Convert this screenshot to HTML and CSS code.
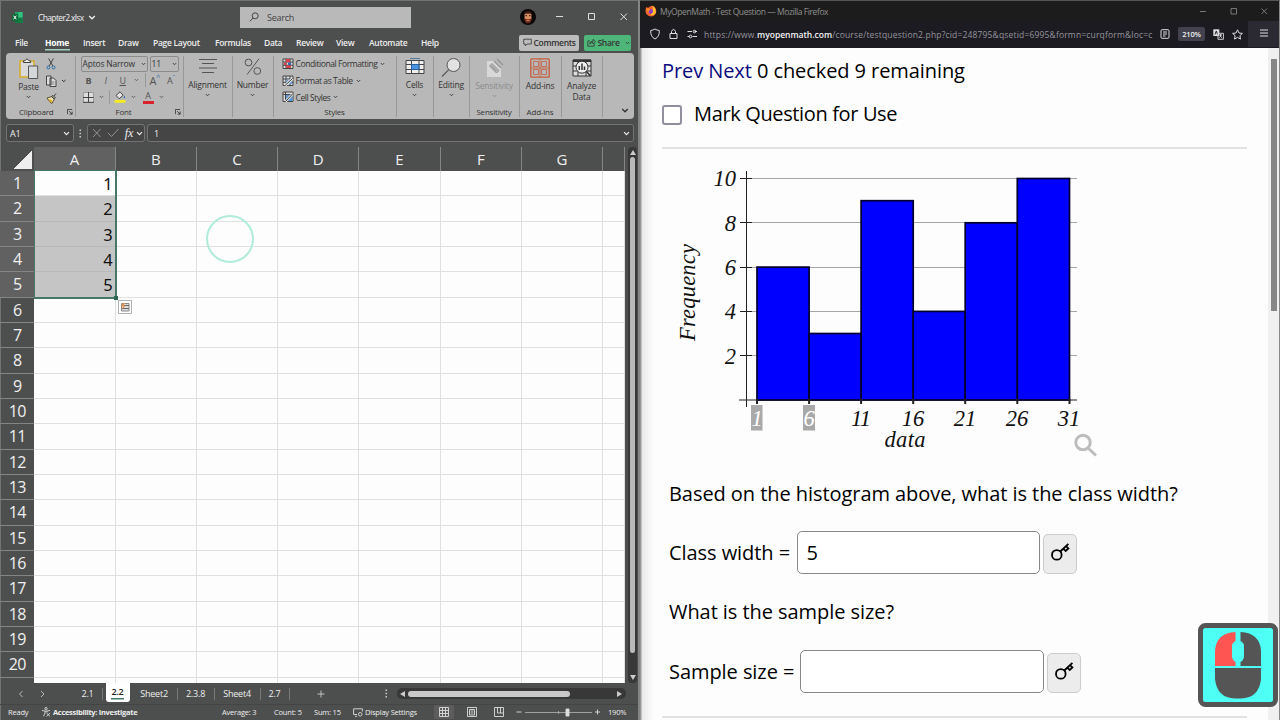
FILE: index.html
```html
<!DOCTYPE html>
<html lang="en">
	<head>
		<meta charset="UTF-8" />
		<meta name="viewport" content="width=device-width, initial-scale=1.0" />
		<title>Chapter 2 - Histograms</title>
		<link rel="stylesheet" href="styles.css">
	</head>
	<body>
		<svg class="defs">
			<symbol id="chev" viewBox="0 0 10 6"><path d="M1.5 1L5 4.5L8.5 1" fill="none" stroke="currentColor" stroke-width="1.7" /></symbol>
			<symbol id="launch" viewBox="0 0 7 7"><path d="M.5 6V.5H6M2.5 2.5L6 6M6 3V6H3" fill="none" stroke="currentColor" /></symbol>
			<symbol id="key" viewBox="0 0 20 20"><circle cx="6.8" cy="12.9" r="4.8" /><path d="M10.3 9.5L18.4 1.8M13.3 6.7L15.7 9L18.4 6.5L16.1 4.2" /></symbol>
		</svg>

		<!-- Excel -->
		<div class="excel">
			<div class="titlebar">
				<svg class="logo" viewBox="0 0 11 11"><path d="M3 0H10.5V11H3Z" fill="#21a366" /><path d="M6.5 0H10.5V5H6.5Z" fill="#33c481" /><path d="M3 6H10.5V11H3Z" fill="#107c41" /><rect y="2" width="6" height="7" rx=".6" fill="#0d6a38" /><path d="M1.6 3.7L4.3 7.3M4.3 3.7L1.6 7.3" stroke="#fff" /></svg>
				<span class="filename">Chapter2.xlsx</span>
				<svg class="chev"><use href="#chev" /></svg>
				<div class="search">
					<svg viewBox="0 0 10 10"><circle cx="6.2" cy="3.8" r="3" /><path d="M4 6L.8 9.4" /></svg>
					<span>Search</span>
				</div>
				<svg class="avatar" viewBox="0 0 16 16"><circle cx="8" cy="8" r="8" fill="#080606" /><path d="M4.6 5Q8 1 11.4 5V10Q11 13.6 8 14Q5 13.6 4.6 10Z" fill="#d98d63" /><path d="M4.4 5.5Q4.8 2.2 8 2.2T11.6 5.5L10.6 4.8H5.4Z" fill="#4a2117" /><path d="M4.6 9.5L6.2 10H9.8L11.4 9.5Q11.2 14.2 8 14.5Q4.8 14.2 4.6 9.5Z" fill="#702a1c" /><path d="M5.5 6.7H7M9 6.7H10.5" stroke="#29110b" /><path d="M6.6 11.3H9.4" stroke="#e9a07d" /></svg>
				<svg class="winbtns" viewBox="0 0 76 12"><path d="M3 5.5H10M35.5 2.5H41.5V8.5H35.5ZM67.5 2.500L74 9M74 2.500L67.5 9" /></svg>
			</div>
			<div class="menu">
				<span class="m1">File</span><span class="m2 active">Home</span><span class="m3">Insert</span><span class="m4">Draw</span><span class="m5">Page Layout</span><span class="m6">Formulas</span><span class="m7">Data</span><span class="m8">Review</span><span class="m9">View</span><span class="m10">Automate</span><span class="m11">Help</span>
				<div class="comments"><svg viewBox="0 0 9 9"><path d="M.7 1.2H8.3V6H4L2.3 7.8V6H.7Z" /></svg>Comments</div>
				<div class="share"><svg viewBox="0 0 9 9"><path d="M3 3H.8V8.2H7.2V5.6M2.6 6Q3 3.2 6 3.2V1.3L8.5 3.7L6 6V4.5Q4 4.4 2.6 6Z" /></svg>Share<svg class="chev"><use href="#chev" /></svg></div>
			</div>
			<div class="ribbon">
				<div class="group clipboard">
					<div class="tools">
						<div class="big">
							<svg class="paste" viewBox="0 0 20 22"><path d="M1 3H15V19H1Z" fill="#d9d9d9" stroke="#d5ad2b" stroke-width="1.6" /><path d="M4.5 4.5V2.8H6Q8-.8 10 2.8H11.6V4.5Z" fill="#eee" stroke="#444" /><path d="M9.5 8H18.7V20.5H9.5Z" fill="#d4d7da" stroke="#555" /></svg>
							<span>Paste</span>
							<svg class="chev"><use href="#chev" /></svg>
						</div>
						<div class="small">
							<svg viewBox="0 0 16 12"><path d="M2.6.5L6.8 8M7.4.5L3.2 8" stroke="#444" fill="none" /><circle cx="2.4" cy="9.5" r="1.5" fill="none" stroke="#2c6da8" /><circle cx="7.6" cy="9.5" r="1.5" fill="none" stroke="#2c6da8" /></svg>
							<svg class="wide" viewBox="0 0 20 12"><path d="M.5 1H5V10H.5ZM4 3H7.5L10 5.5V11.5H4Z" fill="#ddd" stroke="#444" /><path d="M5.5 7H8.5M5.5 9H8.5" stroke="#444" stroke-width=".6" /><path d="M16 5L17.8 6.7L19.6 5" fill="none" stroke="#333" /></svg>
							<svg viewBox="0 0 16 12"><path d="M1 6L6 4.5L8.4 7L6 11.5Q3 10 1 6Z" fill="#eee3b0" stroke="#5c5031" /><path d="M5.5 4.5L8 7L9.4 5.8L7 3.4ZM8 4.2L10 1.5" fill="none" stroke="#444" /><path d="M3 8L6 9.5" stroke="#dfae26" stroke-width="2" /></svg>
						</div>
					</div>
					<div class="caption">Clipboard<svg class="launch"><use href="#launch" /></svg></div>
				</div>
				<div class="group font">
					<div class="combos">
						<div class="combo">Aptos Narrow<svg class="chev"><use href="#chev" /></svg></div>
						<div class="combo size">11<svg class="chev"><use href="#chev" /></svg></div>
					</div>
					<div class="fontrow">
						<b>B</b><i>I</i><u>U</u><svg class="chev"><use href="#chev" /></svg><span class="bar"></span><span class="grow">A<sup>^</sup></span><span class="shrink">A<sup>ˇ</sup></span>
					</div>
					<div class="fontrow second">
						<svg class="borders" viewBox="0 0 11 11"><path d="M.5.5H10.5V10.5H.5Z" fill="#ddd" stroke="#999" /><path d="M5.5 0V10M0 5.5H10.5M0 10.3H11" stroke="#444" /></svg>
						<svg class="chev"><use href="#chev" /></svg>
						<span class="bar"></span>
						<svg class="fill" viewBox="0 0 12 12"><path d="M2 4.5L6 .8L9.2 4.2L5.2 7.7Z" fill="#e4e4e4" stroke="#444" /><path d="M10.3 4.5Q11.8 7 10.3 7.4Q9 7 10.3 4.5" fill="#296fae" /><path d="M.5 9H11.5V11.8H.5Z" fill="#f2ec21" /></svg>
						<svg class="chev"><use href="#chev" /></svg>
						<span class="color">A</span>
						<svg class="chev"><use href="#chev" /></svg>
					</div>
					<div class="caption">Font<svg class="launch"><use href="#launch" /></svg></div>
				</div>
				<div class="group w49">
					<svg class="icon" viewBox="0 0 20 20"><path d="M1 1.500H19M4 5.500H16M1 10H19M4 14.500H16" stroke="#555" fill="none" /></svg>
					<span>Alignment</span><svg class="chev"><use href="#chev" /></svg>
				</div>
				<div class="group w41">
					<svg class="icon" viewBox="0 0 20 20"><g fill="none" stroke="#555"><circle cx="5.500" cy="4.500" r="3.400" /><circle cx="14.300" cy="13" r="3.400" /><path d="M16 .8L4 16.600" /></g></svg>
					<span>Number</span><svg class="chev"><use href="#chev" /></svg>
				</div>
				<div class="group styles">
					<div class="srow"><svg viewBox="0 0 12 12"><path d="M1 1H11V10.5H1Z" fill="#ddd" stroke="#444" /><path d="M1 4H11M1 7.3H11M4 1V10.5M8 1V10.5" stroke="#444" /><path d="M4 1H8V4H4ZM2 4.5H4.5V7H2ZM4 7.5H9V10H4Z" fill="#d8434b" /><path d="M6 4.5H9V7H6Z" fill="#356eb6" /></svg>Conditional Formatting<svg class="chev"><use href="#chev" /></svg></div>
					<div class="srow"><svg viewBox="0 0 12 12"><path d="M1 1H11V10.5H1Z" fill="#ddd" stroke="#444" /><path d="M1 4H11M1 7.3H11M4 1V10.5M8 1V10.5" stroke="#444" /><path d="M4.5 4.5H10V9H4.5Z" fill="#6aa0d8" /><path d="M3 10.5L10.5 3.5" stroke="#eee" stroke-width="2.4" /><path d="M3 10.5L10.5 3.5" stroke="#333" /></svg>Format as Table<svg class="chev"><use href="#chev" /></svg></div>
					<div class="srow"><svg viewBox="0 0 12 12"><path d="M1 1H11V10.5H1Z" fill="#ddd" stroke="#444" /><path d="M1 3.5H11M3.5 1V10.5" stroke="#444" /><path d="M4 4H10.5V10H4Z" fill="#5d98d2" /><path d="M3.5 10.5L10.5 3" stroke="#eee" stroke-width="2.4" /><path d="M3.5 10.5L10.5 3" stroke="#333" /></svg>Cell Styles<svg class="chev"><use href="#chev" /></svg></div>
					<div class="caption">Styles</div>
				</div>
				<div class="group w37">
					<svg class="icon" viewBox="0 0 20 20"><path d="M1 2.500H19V15.500H1Z" fill="#eee" stroke="#444" /><path d="M1 6.500H19M1 11.500H19M6.5 2.500V15.500M14 2.500V15.500" stroke="#444" /><path d="M6.5 6.500H14V11.500H6.5Z" fill="#4e93df" stroke="#2461a4" /><path d="M5 .3H15" stroke="#356d98" /></svg>
					<span>Cells</span><svg class="chev"><use href="#chev" /></svg>
				</div>
				<div class="group w36">
					<svg class="icon" viewBox="0 0 20 20"><circle cx="12.5" cy="7" r="6.5" fill="#e2e2e2" stroke="#555" /><path d="M7.8 11.700L1 18.500" stroke="#555" stroke-width="1.2" /></svg>
					<span>Editing</span><svg class="chev"><use href="#chev" /></svg>
				</div>
				<div class="group w50 low">
					<svg class="icon" viewBox="0 0 20 20"><path d="M3 3H11L17 9V19H3Z" fill="#d8d8d8" /><path d="M10 3L17 10M13 1L19 7" stroke="#999" stroke-width="1.6" /><path d="M5.5 8L8 5.5L15 12.5L12.5 15Z" fill="#b8b8b8" stroke="#929292" /><path d="M7.500 8L12.500 13" stroke="#888" /></svg>
					<span class="dim">Sensitivity</span><svg class="chev dim"><use href="#chev" /></svg>
					<div class="caption">Sensitivity</div>
				</div>
				<div class="group w42 low">
					<svg class="icon" viewBox="0 0 20 20"><g fill="none" stroke="#c65d3c"><rect x=".8" y=".8" width="18.4" height="18.4" rx="1" stroke-width="1.3" /><path d="M3.5 3.5H8.5V8.5H3.5ZM11.5 3.5H16.5V8.5H11.5ZM3.5 11.5H8.5V16.5H3.5ZM11.5 11.5H16.5V16.5H11.5ZM10 1V19M1 10H19" stroke-width=".8" /></g></svg>
					<span>Add-ins</span>
					<div class="caption">Add-ins</div>
				</div>
				<div class="group w41 low analyze">
					<svg class="icon" viewBox="0 0 20 20"><path d="M1 2H19V18H1Z" fill="#ddd" stroke="#333" /><path d="M1 3.5H19M1 8H19M1 13H19M6 4V18M14 4V18" stroke="#333" /><path d="M1 2.5H19" stroke="#333" stroke-width="2" /><circle cx="10" cy="9.2" r="6" fill="#eee" stroke="#333" /><path d="M14.4 13.4L18.6 18" stroke="#333" stroke-width="1.5" /><path d="M7.3 8V12M10 5.5V12M12.5 8.5V12" stroke="#333" stroke-width="1.5" /></svg>
					<span>Analyze<br />Data</span>
				</div>
				<svg class="chev collapse"><use href="#chev" /></svg>
			</div>
			<div class="formulabar">
				<div class="namebox">A1<svg class="chev"><use href="#chev" /></svg></div>
				<svg class="dots" viewBox="0 0 3 9"><path d="M.5.5H2V2H.5ZM.5 3.7H2V5.2H.5ZM.5 7H2V8.5H.5Z" fill="#ccc" /></svg>
				<div class="fx">
					<svg viewBox="0 0 30 10"><path d="M1 1L8.5 9M8.5 1L1 9M16 5L19.5 8.5L26.5 1" fill="none" stroke="#929292" /></svg>
					<i>fx</i><svg class="chev"><use href="#chev" /></svg>
				</div>
				<div class="formula">1<svg class="chev"><use href="#chev" /></svg></div>
			</div>
			<div class="sheetarea">
				<div class="sheet">
					<div class="selection"></div>
					<svg class="quick" viewBox="0 0 14 14"><path d="M.5.5H13.5V13.5H.5Z" fill="#fff" stroke="#adb3b0" /><path d="M3.5 3.5H11V11H3.5Z" fill="#ddd" stroke="#888" /><path d="M6 5.5H11M4 8.5H11" stroke="#666" /><path d="M5 3L3 6.5H5L4 9.5L7.5 5.5H5.7L7 3Z" fill="#e4924c" /></svg>
					<div class="click"></div>
				</div>
				<div class="vscroll"><i class="up"></i><span></span><i class="down"></i></div>
			</div>
			<div class="tabs">
				<svg class="nav" viewBox="0 0 28 8"><path d="M4.5 1L1.5 4L4.5 7M23 1L26 4L23 7" fill="none" stroke="#b5b5b5" /></svg>
				<span class="tab t1">2.1</span><span class="tab current">2.2</span><span class="tab t3">Sheet2</span><span class="tab t4">2.3.8</span><span class="tab t5">Sheet4</span><span class="tab t6">2.7</span>
				<svg class="add" viewBox="0 0 8 8"><path d="M4 .5V7.5M.5 4H7.5" stroke="#ccc" stroke-width=".9" /></svg>
				<svg class="dots" viewBox="0 0 3 9"><path d="M.5.5H2V2H.5ZM.5 3.7H2V5.2H.5ZM.5 7H2V8.5H.5Z" fill="#ccc" /></svg>
				<div class="hscroll"><i class="left"></i><span></span><i class="right"></i></div>
			</div>
			<div class="status">
				<span class="s1">Ready</span>
				<svg class="acc" viewBox="0 0 10 10"><circle cx="5" cy="1.7" r="1.2" /><path d="M1 3.4L4 4.2V6L2.5 9.3M9 3.4L6 4.2V5.5M4 4.2H6M5.5 6L9 9.3M9 6L5.5 9.3" /></svg>
				<span class="s2">Accessibility: Investigate</span><span class="s3">Average: 3</span><span class="s4">Count: 5</span><span class="s5">Sum: 15</span>
				<svg class="disp" viewBox="0 0 10 9"><path d="M4 6.5H.6V.8H9.4V3.5M2 8.3H4" /><circle cx="7.2" cy="6.3" r="1.8" /></svg>
				<span class="s6">Display Settings</span>
				<span class="vbtn on"><svg viewBox="0 0 10 10"><path d="M.5.5H9.5V9.5H.5ZM3.5.5V9.5M6.5.5V9.5M.5 3.5H9.5M.5 6.5H9.5" /></svg></span>
				<span class="vbtn"><svg viewBox="0 0 10 10"><path d="M.5.5H9.5V9.5H.5ZM2.5 2.5H7.5V8H2.5ZM3.5 4H6.5M3.5 6H6.5" /></svg></span>
				<span class="vbtn"><svg viewBox="0 0 10 10"><path d="M.5.5H9.5V9.5H.5ZM3.5.5V6H9.5M6.5.5V6" /></svg></span>
				<svg class="zoom" viewBox="0 0 84 10"><path d="M.5 5H5.5M79 5H84M81.5 2.5V7.5" stroke="#ddd" /><path d="M9 5.5H76M42.5 4V7" stroke="#aaa" /><path d="M50 2H53V9H50Z" fill="#ddd" /></svg>
				<span class="s7">190%</span>
			</div>
		</div>

		<!-- Firefox -->
		<div class="firefox">
			<div class="fftitle">
				<svg class="fox" viewBox="0 0 12 12"><path d="M6 1Q9 0 10.7 3.6Q12.5 8.5 8.5 11Q4 12.6 1.2 9Q-.4 5.4 1.6 1.7L3 3Q4.5 1.6 6 1Z" fill="#f3632b" /><path d="M7.5.5Q11.6 4 10.7 8Q8.5 11 5 10Q9 8 7.5.5Z" fill="#ffc32c" /><circle cx="5.6" cy="6.3" r="2.4" fill="#8c3ccc" /><path d="M1.4 3Q4.5 3.2 5.5 5Q3.5 5 3.6 7.4Q1.4 7 1.4 3Z" fill="#fb8b22" /></svg>
				<span>MyOpenMath - Test Question — Mozilla Firefox</span>
				<svg class="winbtns" viewBox="0 0 76 12"><path d="M5 6.5H11M36 3.5H41.5V9H36ZM66.5 3.5L72 9M72 3.5L66.5 9" /></svg>
			</div>
			<div class="urlbar">
				<svg class="urlicons" viewBox="0 0 50 12"><path d="M6 1Q8 2.3 10.3 2.5Q10.7 8.7 6 11Q1.300 8.700 1.700 2.500Q4 2.300 6 1ZM21 5.500H28V10.500H21ZM22.500 5.500V3.500Q24.500-.8 26.500 3.500V5.500M38.500 3.500H43M45.500 3.500H48M38.500 8.500H40.500M43.500 8.500H48" /><circle cx="45.500" cy="3.500" r="1.300" /><circle cx="41.500" cy="8.500" r="1.300" /></svg>
				<span class="url">https://www.<b>myopenmath.com</b>/course/testquestion2.php?cid=248795&amp;qsetid=6995&amp;formn=curqform&amp;loc=c</span>
				<svg class="reader" viewBox="0 0 10 10"><rect x="1" y=".7" width="8" height="8.600" rx="1" /><path d="M3 3H7M3 5H7M3 7H5.500" /></svg>
				<span class="pct">210%</span>
				<svg class="translate" viewBox="0 0 11 11"><path d="M.3.3H6.300V7H.3Z" fill="#ddd" stroke="none" /><path d="M2 5.500L3.300 2L4.600 5.500" stroke="#222" /><path d="M5 4.300H10.400V10.300H5ZM6.300 6H9M7.700 5V6Q7.500 8 6.300 8.700M7 7L9 8.700" stroke-width=".9" /></svg>
				<svg class="star" viewBox="0 0 11 11"><path d="M5.500.8L7 4L10.400 4.400L7.900 6.700L8.500 10.100L5.500 8.400L2.500 10.100L3.100 6.700L.6 4.400L4 4Z" /></svg>
				<span class="burger"><svg viewBox="0 0 8 8"><path d="M0 1H8M0 4H8M0 7H8" /></svg></span>
			</div>
			<div class="page">
				<div class="content">
					<div class="nav-links"><a>Prev</a> <a>Next</a> 0 checked 9 remaining</div>
					<label class="mark"><span class="box"></span><span class="marktext">Mark Question for Use</span></label>
					<hr />
					<svg class="chart" viewBox="662 160 450 300">
						<path class="grid" d="M740 178.500H1077M740 222.500H1077M740 267.500H1077M740 311.500H1077M740 355.500H1077" />
						<path class="tick" d="M740 178.500H752M740 222.500H752M740 267.500H752M740 311.500H752M740 355.500H752M746.500 171V407M739 400H1077" />
						<g class="bars">
							<rect x="757" y="267.100" width="52.100" height="132.900" />
							<rect x="809.100" y="333.500" width="52" height="66.500" />
							<rect x="861.100" y="200.700" width="52.100" height="199.300" />
							<rect x="913.200" y="311.400" width="52" height="88.600" />
							<rect x="965.200" y="222.800" width="52.100" height="177.200" />
							<rect x="1017.300" y="178.500" width="52.200" height="221.500" />
						</g>
						<path class="bottom" d="M757 399V404M809.100 399V404M861.100 399V404M913.200 399V404M965.200 399V404M1017.300 399V404M1069.500 399V404" />
						<path class="marked" d="M751 405H762.500V430.500H751ZM803 405H815V430.500H803Z" />
						<g class="ylab">
							<text x="736" y="186">10</text><text x="736" y="230.500">8</text><text x="736" y="275">6</text><text x="736" y="319">4</text><text x="736" y="363.500">2</text>
						</g>
						<g class="xlab">
							<text class="sel" x="757" y="425.500">1</text><text class="sel" x="809" y="425.500">6</text><text x="861" y="425.500" textLength="20">11</text><text x="913" y="425.500">16</text><text x="965" y="425.500">21</text><text x="1017" y="425.500">26</text><text x="1069" y="425.500">31</text>
							<text x="905" y="447" textLength="41">data</text>
							<text transform="translate(695 292.500) rotate(-90)" textLength="97">Frequency</text>
						</g>
						<g class="lens"><circle cx="1083" cy="442.500" r="7.200" /><path d="M1088 448L1096 455.500" /></g>
					</svg>
					<p class="q1">Based on the histogram above, what is the class width?</p>
					<div class="answer a1"><label>Class width =</label><div class="field">5</div><div class="keybtn"><svg><use href="#key" /></svg></div></div>
					<p class="q2">What is the sample size?</p>
					<div class="answer a2"><label>Sample size =</label><div class="field"></div><div class="keybtn"><svg><use href="#key" /></svg></div></div>
					<hr class="end" />
				</div>
				<div class="ffscroll"><span></span></div>
			</div>
		</div>

		<!-- mouse button indicator, floats over the browser -->
		<svg class="mouse" viewBox="0 0 80 84">
			<rect x="2.500" y="2.500" width="75" height="79" rx="5" fill="#4dfff4" stroke="#555" stroke-width="5" />
			<path d="M17 43V28Q18 10 37.500 9V18Q34 20 34 23V33Q34 37 37.500 39V43Z" fill="#ff5552" />
			<path d="M63 43V28Q62 10 42.500 9V18Q46 20 46 23V33Q46 37 42.500 39V43Z" fill="#555" />
			<path d="M17 45H63V56Q61 75 43 75.500H37Q19 75 17 56Z" fill="#555" />
		</svg>

		<script>
			const sheet = document.querySelector(".sheet");
			const values = [1, 2, 3, 4, 5];

			function addCell(className, text) {
				const cell = document.createElement("div");
				cell.className = className;
				cell.textContent = text;
				sheet.appendChild(cell);
			}

			// Column letters, the eighth column is cut off
			addCell("corner", "");
			["A", "B", "C", "D", "E", "F", "G", ""].forEach((c) => addCell(c === "A" ? "col picked" : "col", c));

			for (let r = 1; r <= 21; r++) {
				addCell(r <= values.length ? "num picked" : "num", r <= 20 ? r : "");
				for (let c = 0; c < 8; c++) {
					const filled = c === 0 && r <= values.length;
					addCell(filled && r > 1 ? "cell shaded" : "cell", filled ? values[r - 1] : "");
				}
			}
		</script>
	</body>
</html>
```
FILE: styles.css
```css
* {
	box-sizing: border-box;
}

body {
	margin: 0;
	width: 1280px;
	height: 720px;
	overflow: hidden;
	display: flex;
	position: relative;
	font-family: "Open Sans", "Noto Sans", sans-serif;
}

svg {
	display: block;
	flex: none;
}

.defs {
	position: absolute;
	width: 0;
	height: 0;
}

.chev {
	width: 5px;
	height: 4px;
}

/* ---------- Excel ---------- */
.excel {
	width: 640px;
	height: 720px;
	flex: none;
	display: flex;
	flex-direction: column;
	background: #4d4f4e;
	border-top: 1px solid #727473;
	border-right: 2px solid #858585;
	box-shadow: inset 1px 0 #727473;
	color: #eee;
	font-size: 9px;
	white-space: nowrap;
}

.titlebar {
	height: 32px;
	flex: none;
	display: flex;
	align-items: center;
	padding-left: 12px;
}

.logo {
	width: 11px;
	height: 11px;
}

.filename {
	margin-left: 15px;
	width: 48px;
	font-size: 8.5px;
	letter-spacing: -0.65px;
}

.titlebar .chev {
	width: 8px;
	height: 5px;
	margin-left: 2px;
}

.search {
	margin-left: 144px;
	width: 171px;
	height: 21px;
	background: #b9b9b9;
	color: #444;
	display: flex;
	align-items: center;
	padding-left: 9px;
	gap: 8px;
	margin-right: 108.5px;
	letter-spacing: -0.25px;
}

.search svg {
	width: 10px;
	height: 10px;
	fill: none;
	stroke: #444;
}

.avatar {
	width: 16px;
	height: 16px;
}

.winbtns {
	width: 76px;
	height: 12px;
	margin-left: 17.5px;
	fill: none;
	stroke: #ddd;
}

.menu {
	height: 19.5px;
	flex: none;
	display: flex;
	padding: 1px 0 0 15px;
	line-height: 17px;
	font-weight: 600;
	font-size: 8.5px;
	letter-spacing: -0.3px;
}

.menu > span {
	height: 18px;
}

.menu .active {
	color: #fff;
	font-weight: bold;
	background: linear-gradient(#a3d1c0, #a3d1c0) left 15px / 25px 1.5px no-repeat;
}

.m1 { width: 30px; }
.m2 { width: 38px; }
.m3 { width: 35px; }
.m4 { width: 35px; }
.m5 { width: 62px; }
.m6 { width: 49px; }
.m7 { width: 32px; }
.m8 { width: 40px; }
.m9 { width: 33px; }
.m10 { width: 52px; }
.m11 { width: 97.5px; }

.comments,
.share {
	height: 15.5px;
	display: flex;
	align-items: center;
	border-radius: 2px;
	background: #bcbcbc;
	color: #333;
	width: 60px;
	padding-left: 4px;
	gap: 2px;
	margin-top: 1px;
}

.share {
	margin-left: 5px;
	width: 47px;
	background: #4fb67a;
	padding-left: 3px;
}

.comments > svg,
.share > svg:first-child {
	width: 9px;
	height: 9px;
	fill: none;
	stroke: #333;
	stroke-width: 0.8;
}

.share .chev {
	margin-left: 3px;
}

.ribbon {
	margin-left: 6px;
	width: 628px;
	height: 66.5px;
	flex: none;
	display: flex;
	padding: 3px 0;
	background: #b8b8b8;
	border-radius: 4px;
	color: #333;
	font-size: 8.5px;
	letter-spacing: -0.2px;
}

.group {
	height: 61px;
	flex: none;
	border-right: 1px solid #989898;
	display: flex;
	flex-direction: column;
	align-items: center;
	line-height: 11px;
}

.group > .icon {
	width: 20px;
	height: 20px;
	margin-top: 2px;
	margin-bottom: 1px;
}

.group.low > .icon {
	margin-bottom: 2.5px;
}

.group > .chev {
	margin-top: 3px;
}

.caption {
	margin-top: auto;
	line-height: 12px;
	font-size: 8px;
	margin-bottom: -1px;
	display: flex;
	align-items: center;
}

.launch {
	width: 6px;
	height: 6px;
}

.w49 { width: 49px; }
.w41 { width: 41px; }
.w37 { width: 37px; }
.w36 { width: 36px; }
.w50 { width: 50px; }
.w42 { width: 42px; }

.dim {
	color: #8c8c8c;
}

.analyze {
	text-align: center;
}

.clipboard {
	width: 69.5px;
}

.clipboard .caption {
	align-self: stretch;
	padding-left: 13px;
	justify-content: space-between;
	padding-right: 2px;
}

.tools {
	align-self: stretch;
	display: flex;
	padding-left: 12px;
}

.big {
	width: 21px;
	display: flex;
	flex-direction: column;
	align-items: center;
	padding-top: 2px;
}

.big .paste {
	width: 20px;
	height: 22px;
	margin-bottom: 1px;
}

.big .chev {
	margin-top: 3px;
}

.small {
	margin-left: 7px;
	display: flex;
	flex-direction: column;
	gap: 5px;
	padding-top: 2px;
}

.small svg {
	width: 16px;
	height: 12px;
}

.small .wide {
	width: 20px;
}

.font {
	width: 108px;
	align-items: stretch;
	padding-left: 5px;
}

.combos {
	display: flex;
	gap: 2px;
}

.combo {
	width: 67px;
	height: 16px;
	border: 1px solid #8b8b8b;
	border-radius: 2px;
	display: flex;
	align-items: center;
	justify-content: space-between;
	padding: 0 1px 0 1px;
}

.combo.size {
	width: 29px;
}

.fontrow {
	height: 17.5px;
	display: flex;
	align-items: center;
	color: #555;
	font-size: 9px;
}

.fontrow b {
	margin-left: 5px;
	width: 19px;
}

.fontrow i {
	width: 15px;
}

.fontrow u {
	width: 14px;
}

.bar {
	width: 1px;
	height: 14px;
	background: #999;
	margin-left: 6px;
}

.grow {
	margin-left: 4px;
	font-size: 11px;
}

.shrink {
	margin-left: 7px;
	font-size: 9px;
}

.fontrow sup {
	font-size: 7px;
	color: #2c6da8;
	line-height: 0;
}

.second .borders {
	width: 11px;
	height: 11px;
	margin-left: 2px;
}

.second .chev {
	margin-left: 5px;
}

.second .bar {
	margin-left: 5px;
}

.fill {
	width: 12px;
	height: 12px;
	margin-left: 4px;
}

.color {
	width: 11px;
	height: 13px;
	line-height: 10px;
	text-align: center;
	border-bottom: 3px solid #d8232c;
	margin-left: 7px;
}

.font .caption {
	padding-left: 35px;
	justify-content: space-between;
	padding-right: 2px;
}

.styles {
	width: 123px;
	align-items: stretch;
	letter-spacing: -0.42px;
}

.srow {
	height: 17.5px;
	display: flex;
	align-items: center;
	padding-left: 8px;
	gap: 2px;
}

.srow > svg:first-child {
	width: 12px;
	height: 12px;
}

.srow .chev {
	margin-left: 1px;
}

.styles .caption {
	justify-content: center;
	letter-spacing: -0.2px;
}

.collapse {
	width: 8px;
	height: 5px;
	margin: 52px 0 0 18px;
}

.formulabar {
	height: 28px;
	flex: none;
	display: flex;
	align-items: center;
	padding-left: 6px;
}

.namebox,
.fx,
.formula {
	height: 17.5px;
	border: 1px solid #737373;
	border-radius: 3px;
	background: #454545;
	display: flex;
	align-items: center;
	justify-content: space-between;
	padding: 0 3px;
}

.formulabar .chev {
	width: 7px;
	height: 5px;
}

.namebox {
	width: 68px;
	letter-spacing: -0.3px;
}

.dots {
	width: 3px;
	height: 9px;
	margin: 0 5px;
}

.fx {
	width: 58px;
	padding: 0 1px 0 4px;
}

.fx > svg:first-child {
	width: 30px;
	height: 10px;
}

.fx i {
	font-family: "Liberation Serif", serif;
	font-size: 12px;
}

.formula {
	margin-left: 2px;
	width: 487px;
	padding-left: 6px;
}

.sheetarea {
	height: 536px;
	flex: none;
	display: flex;
	overflow: hidden;
}

.sheet {
	position: relative;
	width: 625px;
	height: 536px;
	flex: none;
	overflow: hidden;
	display: grid;
	grid-template-columns: 34.4px repeat(7, 81.25px) 1fr;
	grid-template-rows: 24px repeat(21, 25.33px);
}

.corner {
	background: linear-gradient(135deg, transparent 50%, #eee 50%) 13px 3px / 19px 19px no-repeat;
}

.col,
.num {
	color: #f0f0f0;
	display: flex;
	align-items: center;
	justify-content: center;
}

.col {
	font-size: 15px;
	border-right: 1px solid #858585;
}

.num {
	font-size: 16px;
	border-bottom: 1px solid #858585;
	letter-spacing: -0.8px;
}

.picked {
	background: #616161;
}

.cell {
	background: #fdfdfd;
	border-right: 1px solid #e0e0e0;
	border-bottom: 1px solid #e0e0e0;
	color: #111;
	font-family: "Noto Sans", sans-serif;
	font-size: 16.5px;
	line-height: 26px;
	text-align: right;
	padding-right: 2px;
}

.shaded {
	background: #c5c5c5;
	border-bottom-color: #b9b9b9;
}

.selection {
	position: absolute;
	left: 34px;
	top: 23px;
	width: 83px;
	height: 129px;
	border: 2px solid #46786a;
	border-width: 1px 2px 2px 1px;
}

.selection::after {
	content: "";
	position: absolute;
	right: -3px;
	bottom: -3px;
	width: 4px;
	height: 4px;
	background: #2d6655;
}

.quick {
	position: absolute;
	left: 118px;
	top: 153px;
	width: 14px;
	height: 14px;
}

.click {
	position: absolute;
	left: 206px;
	top: 68px;
	width: 48px;
	height: 48px;
	border: 2px solid #b0ecdb;
	border-radius: 50%;
}

.vscroll {
	width: 9px;
	margin-left: 3px;
	background: #383838;
	border-radius: 4px;
	display: flex;
	flex-direction: column;
	align-items: center;
	padding: 3px 0;
}

.vscroll span {
	width: 5px;
	height: 496px;
	margin: 2px 0 auto;
	border-radius: 3px;
	background: #b9b9b9;
}

.up,
.down {
	border: 3px solid transparent;
	border-top-width: 0;
	border-bottom: 5px solid #ccc;
}

.down {
	transform: rotate(180deg);
}

.tabs {
	height: 21px;
	flex: none;
	display: flex;
	align-items: center;
	padding-left: 18px;
}

.nav {
	width: 28px;
	height: 8px;
	margin-right: 27px;
}

.tab {
	height: 12px;
	line-height: 11px;
	text-align: center;
	border-right: 1px solid #777;
	letter-spacing: -0.2px;
}

.t1 { width: 30px; }
.t3 { width: 46px; }
.t4 { width: 37px; }
.t5 { width: 46px; }
.t6 { width: 29px; }

.tab.current {
	width: 24px;
	height: 19px;
	align-self: flex-start;
	line-height: 18px;
	margin: 0 2px 0 2.5px;
	border: 0;
	border-radius: 0 0 3px 3px;
	color: #222;
	font-weight: 600;
	background: linear-gradient(#42786a, #42786a) center 15px / 13px 1.5px no-repeat #fff;
}

.add {
	width: 8px;
	height: 8px;
	margin-left: 27px;
}

.tabs .dots {
	margin-left: 60px;
	margin-right: 9px;
}

.hscroll {
	width: 229px;
	height: 11px;
	border-radius: 5px;
	background: #383838;
	display: flex;
	align-items: center;
	padding: 0 4px 0 3px;
}

.hscroll span {
	width: 162px;
	height: 6px;
	margin: 0 auto 0 3px;
	border-radius: 3px;
	background: #c9c9c9;
}

.left,
.right {
	border: 3px solid transparent;
	border-left-width: 0;
	border-right: 5px solid #ccc;
}

.right {
	transform: rotate(180deg);
}

.status {
	flex: 1;
	display: flex;
	align-items: center;
	border-top: 1px solid #444;
	padding: 0 0 1px 8px;
	font-size: 7.5px;
	letter-spacing: -0.2px;
}

.s1 { width: 33px; }
.s2 { width: 169px; margin-left: 2px; font-weight: bold; letter-spacing: -0.3px; }
.s3 { width: 52px; }
.s4 { width: 40px; }
.s5 { width: 39px; }
.s6 { width: 67px; margin-left: 2px; }

.status svg {
	fill: none;
	stroke: #ddd;
	stroke-width: 0.9;
}

.acc {
	width: 10px;
	height: 10px;
}

.disp {
	width: 10px;
	height: 9px;
}

.vbtn {
	width: 27px;
	height: 14px;
	display: flex;
	align-items: center;
	justify-content: center;
}

.vbtn.on {
	width: 20px;
	margin-right: 4px;
	margin-left: 2px;
	background: #5c5c5c;
}

.vbtn svg {
	width: 10px;
	height: 10px;
}

.zoom {
	width: 84px;
	height: 10px;
	margin: 0 8px 0 4px;
}

/* ---------- Firefox ---------- */
.firefox {
	width: 640px;
	height: 720px;
	flex: none;
	display: flex;
	flex-direction: column;
	border-top: 1px solid #555;
	border-right: 1px solid #888;
	background: #1c1c1c;
}

.fftitle {
	height: 20px;
	flex: none;
	display: flex;
	align-items: center;
	padding-left: 5px;
	font-size: 8.5px;
	letter-spacing: -0.42px;
	color: #8e8e8e;
}

.fftitle span {
	margin-left: 3px;
	width: 400px;
}

.fftitle .winbtns {
	margin-left: 135px;
	stroke: #777;
}

.fox {
	width: 12px;
	height: 12px;
}

.urlbar {
	height: 27px;
	flex: none;
	display: flex;
	align-items: center;
	padding: 0 0 1px 9px;
	background: #1c1b22;
	font-size: 8.5px;
	letter-spacing: 0.17px;
	color: #96959b;
}

.urlbar svg {
	fill: none;
	stroke: #ddd;
}

.urlicons {
	width: 50px;
	height: 12px;
}

.url {
	width: 452px;
	margin-left: 5px;
	white-space: nowrap;
	overflow: hidden;
}

.url b {
	color: #f4f4f4;
	font-weight: 600;
	letter-spacing: 0;
}

.reader {
	width: 10px;
	height: 10px;
	margin-left: 4px;
}

.pct {
	width: 27px;
	height: 14px;
	margin-left: 8px;
	line-height: 14px;
	text-align: center;
	border-radius: 2px;
	background: #42414d;
	color: #eee;
	font-size: 7.5px;
	font-weight: 600;
	letter-spacing: -0.2px;
}

.translate {
	width: 11px;
	height: 11px;
	margin-left: 8px;
}

.star {
	width: 11px;
	height: 11px;
	margin-left: 8px;
}

.burger {
	margin-left: auto;
	width: 31px;
	height: 26px;
	padding: 8px 0 0 12px;
	background: #2b2a33;
}

.burger svg {
	width: 8px;
	height: 8px;
}

.page {
	flex: 1;
	display: flex;
	background: linear-gradient(90deg, #999 1px, #e9e9e9 2px, #fdfdfd 14px);
	font-size: 20px;
	letter-spacing: -0.06px;
	color: #000;
}

.content {
	width: 628px;
	padding: 9px 0 0 22px;
	display: flex;
	flex-direction: column;
}

.nav-links {
	height: 28px;
	line-height: 28px;
	letter-spacing: -0.08px;
}

.nav-links a {
	color: #0a0a80;
}

.mark {
	margin-top: 16px;
	height: 28px;
	display: flex;
	align-items: center;
	gap: 12px;
	letter-spacing: -0.36px;
}

.marktext {
	line-height: 26px;
	padding-bottom: 2px;
}

.box {
	width: 20px;
	height: 20px;
	border: 2px solid #8f8f9d;
	border-radius: 3px;
	background: #fff;
}

hr {
	width: 585px;
	height: 2px;
	flex: none;
	margin: 18px 0 0;
	border: 0;
	background: #e2e2e2;
}

.chart {
	width: 450px;
	height: 300px;
	margin-top: 11px;
	letter-spacing: 0;
}

.grid {
	stroke: #a5a5a5;
}

.tick,
.bottom {
	stroke: #222;
}

.bottom {
	stroke-width: 2;
}

.bars rect {
	fill: #0000ff;
	stroke: #00002b;
	stroke-width: 1.7;
}

.marked {
	fill: #a9a9a9;
}

.chart text {
	font-family: "Liberation Serif", serif;
	font-style: italic;
	font-size: 22.5px;
	fill: #111;
}

.ylab {
	text-anchor: end;
}

.xlab {
	text-anchor: middle;
}

.chart .sel {
	fill: #fff;
}

.lens {
	fill: none;
	stroke: #bdbdbd;
	stroke-width: 3;
}

p {
	margin: 20px 0 0 7px;
	height: 28px;
	line-height: 28px;
}

.answer {
	margin-left: 7px;
	height: 44px;
	display: flex;
	align-items: center;
}

.a1 {
	margin-top: 22px;
}

.a2 {
	margin-top: 23px;
}

.a1 label {
	width: 127.500px;
}

.a2 label {
	width: 131px;
}

.q2 {
	margin-top: 24px;
}

.field {
	width: 243.5px;
	height: 43px;
	border: 1px solid #888;
	border-radius: 5px;
	background: #fff;
	padding-left: 9px;
	line-height: 42px;
}

.keybtn {
	width: 34px;
	height: 40px;
	margin: 4px 0 0 3px;
	border: 1px solid #ccc;
	border-radius: 5px;
	background: #ececec;
	padding: 7px 0 0 6px;
}

.keybtn svg {
	width: 20px;
	height: 20px;
	fill: none;
	stroke: #000;
	stroke-width: 1.8;
}

.end {
	margin-top: 23px;
}

.ffscroll {
	width: 11px;
	background: #f0f0f0;
	padding: 11px 0 0 3px;
}

.ffscroll span {
	display: block;
	width: 6px;
	height: 252px;
	background: #868686;
}

.mouse {
	position: absolute;
	left: 1198px;
	top: 623px;
	width: 80px;
	height: 84px;
}
```
